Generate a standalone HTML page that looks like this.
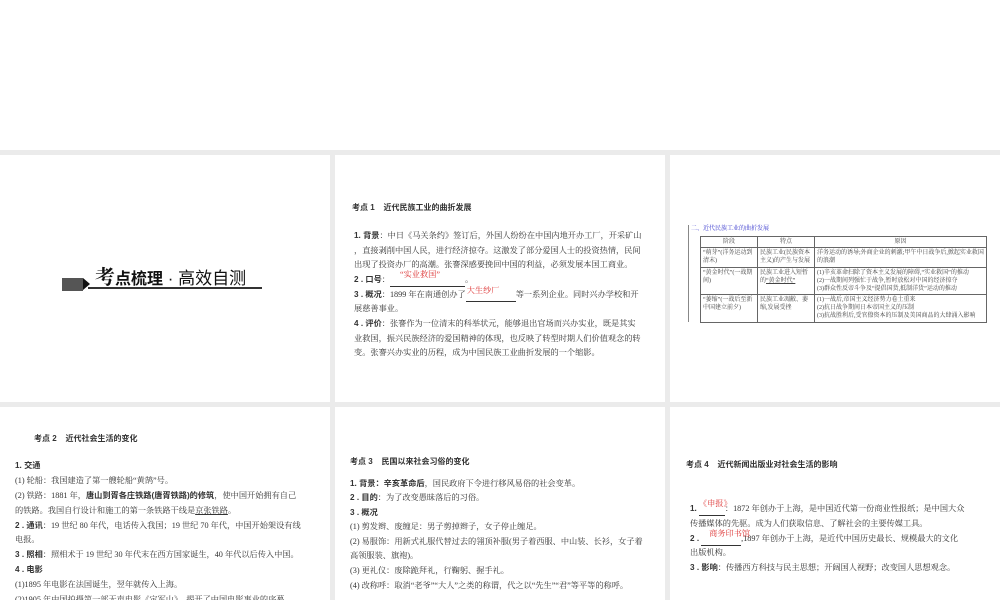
<!DOCTYPE html>
<html><head><meta charset="utf-8"><style>
*{margin:0;padding:0;box-sizing:border-box}
body{width:1000px;height:600px;background:#ebebeb;position:relative;overflow:hidden;font-family:"Liberation Serif","Noto Serif CJK SC",serif;color:#333}
.p{position:absolute;background:#fff;overflow:hidden}
.t{position:absolute;font-size:8.2px;white-space:nowrap;line-height:12px}
.h{font-family:"Liberation Sans","Noto Sans CJK SC",sans-serif;font-weight:bold;font-size:8px}
b{font-family:"Liberation Sans","Noto Sans CJK SC",sans-serif}
.r{color:#d33}
.u{display:inline-block;border-bottom:1px solid #333;position:relative}
table{border-collapse:collapse;font-size:6px;position:absolute;left:30px;top:81px;width:287px;color:#444}
td{border:1px solid #666;padding:1px 2px;line-height:8px;vertical-align:top}
</style></head><body>
<div style="position:absolute;left:0;top:0;width:1000px;height:150px;background:#fff"></div>

<div class="p" style="left:0;top:155px;width:330px;height:247px">
 <div style="position:absolute;left:62px;top:123px;width:21px;height:13px;background:#555"></div>
 <div style="position:absolute;left:83px;top:123px;width:0;height:0;border-top:6.5px solid transparent;border-bottom:6.5px solid transparent;border-left:7px solid #111"></div>
 <div style="position:absolute;left:88px;top:132px;width:174px;height:2px;background:#333"></div>
 <div style="position:absolute;left:95px;top:106px;white-space:nowrap;font-family:'Liberation Sans','Noto Sans CJK SC',sans-serif;color:#111"><span style="font-size:20px;font-weight:bold;font-family:'Noto Serif CJK SC',serif">考</span><span style="font-size:16px;font-weight:bold">点梳理</span><span style="font-size:17px"> · 高效自测</span></div>
</div>

<div class="p" style="left:335px;top:155px;width:330px;height:247px">
 <div class="t h" style="left:17px;top:47px">考点 1 &nbsp;&nbsp; 近代民族工业的曲折发展</div>
 <div class="t" style="left:19px;top:75px"><b>1. 背景</b>：中日《马关条约》签订后，外国人纷纷在中国内地开办工厂，开采矿山</div>
 <div class="t" style="left:19px;top:90px">，直接剥削中国人民，进行经济掠夺。这激发了部分爱国人士的投资热情，民间</div>
 <div class="t" style="left:19px;top:104px">出现了投资办厂的高潮。张謇深感要挽回中国的利益，必须发展本国工商业。</div>
 <div class="t" style="left:19px;top:119px"><b>2 . 口号</b>：<span class="u" style="width:75px"><span class="r" style="position:absolute;left:10px;top:-5px">“实业救国”</span>&nbsp;</span>。</div>
 <div class="t" style="left:19px;top:134px"><b>3 . 概况</b>：1899 年在南通创办了<span class="u" style="width:50px"><span class="r" style="position:absolute;left:1px;top:-4px">大生纱厂</span>&nbsp;</span>等一系列企业。同时兴办学校和开</div>
 <div class="t" style="left:19px;top:148px">展慈善事业。</div>
 <div class="t" style="left:19px;top:163px"><b>4 . 评价</b>：张謇作为一位清末的科举状元，能够退出官场而兴办实业，既是其实</div>
 <div class="t" style="left:19px;top:178px">业救国，振兴民族经济的爱国精神的体现，也反映了转型时期人们价值观念的转</div>
 <div class="t" style="left:19px;top:192px">变。张謇兴办实业的历程，成为中国民族工业曲折发展的一个缩影。</div>
</div>

<div class="p" style="left:670px;top:155px;width:330px;height:247px">
 <div style="position:absolute;left:18px;top:70px;width:1px;height:97px;background:#888"></div>
 <div class="t" style="left:21px;top:68px;font-size:6px;color:#33c">二、近代民族工业的曲折发展</div>
 <table>
  <tr style="height:9px"><td style="width:57px;text-align:center">阶段</td><td style="width:57px;text-align:center">特点</td><td style="text-align:center">原因</td></tr>
  <tr style="height:20px"><td>“萌芽”(洋务运动到清末)</td><td>民族工业(民族资本主义)的产生与发展</td><td>洋务运动的诱导;外商企业的刺激;甲午中日战争后,掀起实业救国的浪潮</td></tr>
  <tr style="height:27px"><td>“黄金时代”(一战期间)</td><td>民族工业进入短暂的<u>“黄金时代”</u></td><td>(1)辛亥革命扫除了资本主义发展的障碍,“实业救国”的推动<br>(2)一战期间列强忙于战争,暂时放松对中国的经济掠夺<br>(3)群众性反帝斗争及“提倡国货,抵制洋货”运动的推动</td></tr>
  <tr style="height:28px"><td>“萎缩”(一战后至新中国建立前夕)</td><td>民族工业凋敝、萎缩,发展受挫</td><td>(1)一战后,帝国主义经济势力卷土重来<br>(2)抗日战争期间日本帝国主义的压制<br>(3)抗战胜利后,受官僚资本的压制及美国商品的大肆涌入影响</td></tr>
 </table>
</div>

<div class="p" style="left:0;top:407px;width:330px;height:193px">
 <div class="t h" style="left:34px;top:26px">考点 2 &nbsp;&nbsp; 近代社会生活的变化</div>
 <div class="t" style="left:15px;top:53px"><b>1. 交通</b></div>
 <div class="t" style="left:15px;top:68px">(1) 轮船：我国建造了第一艘轮船“黄鹄”号。</div>
 <div class="t" style="left:15px;top:83px">(2) 铁路：1881 年，<b>唐山到胥各庄铁路(唐胥铁路)的修筑</b>，使中国开始拥有自己</div>
 <div class="t" style="left:15px;top:98px">的铁路。我国自行设计和施工的第一条铁路干线是<u>京张铁路</u>。</div>
 <div class="t" style="left:15px;top:113px"><b>2 . 通讯</b>：19 世纪 80 年代，电话传入我国；19 世纪 70 年代，中国开始架设有线</div>
 <div class="t" style="left:15px;top:127px">电报。</div>
 <div class="t" style="left:15px;top:142px"><b>3 . 照相</b>：照相术于 19 世纪 30 年代末在西方国家诞生，40 年代以后传入中国。</div>
 <div class="t" style="left:15px;top:157px"><b>4 . 电影</b></div>
 <div class="t" style="left:15px;top:172px">(1)1895 年电影在法国诞生，翌年就传入上海。</div>
 <div class="t" style="left:15px;top:187px">(2)1905 年中国拍摄第一部无声电影《定军山》，揭开了中国电影事业的序幕。</div>
</div>

<div class="p" style="left:335px;top:407px;width:330px;height:193px">
 <div class="t h" style="left:15px;top:49px">考点 3 &nbsp;&nbsp; 民国以来社会习俗的变化</div>
 <div class="t" style="left:15px;top:71px"><b>1. 背景：辛亥革命后</b>，国民政府下令进行移风易俗的社会变革。</div>
 <div class="t" style="left:15px;top:85px"><b>2 . 目的</b>：为了改变愚昧落后的习俗。</div>
 <div class="t" style="left:15px;top:100px"><b>3 . 概况</b></div>
 <div class="t" style="left:15px;top:114px">(1) 剪发辫、废缠足：男子剪掉辫子，女子停止缠足。</div>
 <div class="t" style="left:15px;top:129px">(2) 易服饰：用新式礼服代替过去的翎顶补服(男子着西服、中山装、长衫，女子着</div>
 <div class="t" style="left:15px;top:143px">高领服装、旗袍)。</div>
 <div class="t" style="left:15px;top:158px">(3) 更礼仪：废除跪拜礼，行鞠躬、握手礼。</div>
 <div class="t" style="left:15px;top:173px">(4) 改称呼：取消“老爷”“大人”之类的称谓，代之以“先生”“君”等平等的称呼。</div>
</div>

<div class="p" style="left:670px;top:407px;width:330px;height:193px">
 <div class="t h" style="left:16px;top:52px">考点 4 &nbsp;&nbsp; 近代新闻出版业对社会生活的影响</div>
 <div class="t" style="left:20px;top:96px"><b>1.</b> <span class="u" style="width:26px"><span class="r" style="position:absolute;left:0;top:-5px">《申报》</span>&nbsp;</span>：1872 年创办于上海，是中国近代第一份商业性报纸；是中国大众</div>
 <div class="t" style="left:20px;top:111px">传播媒体的先驱。成为人们获取信息、了解社会的主要传媒工具。</div>
 <div class="t" style="left:20px;top:126px"><b>2 .</b> <span class="u" style="width:40px"><span class="r" style="position:absolute;left:8px;top:-5px">商务印书馆</span>&nbsp;</span>,1897 年创办于上海，是近代中国历史最长、规模最大的文化</div>
 <div class="t" style="left:20px;top:140px">出版机构。</div>
 <div class="t" style="left:20px;top:155px"><b>3 . 影响</b>：传播西方科技与民主思想；开阔国人视野；改变国人思想观念。</div>
</div>
</body></html>
